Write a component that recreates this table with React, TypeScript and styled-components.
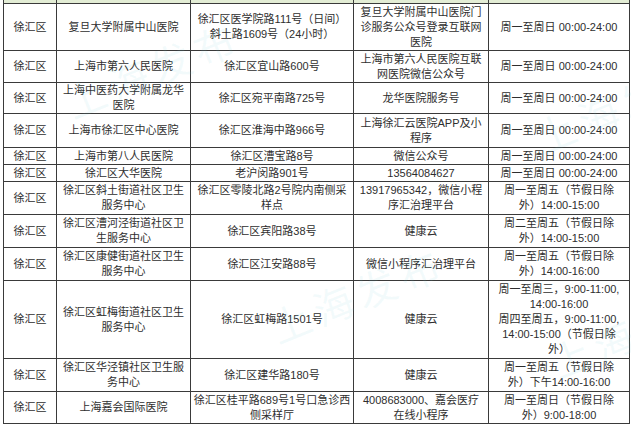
import React from 'react';
import styled, { createGlobalStyle } from 'styled-components';

const GlobalStyle = createGlobalStyle`
  html, body {
    margin: 0;
    padding: 0;
    background: #ffffff;
  }
  body {
    font-family: "Liberation Sans", "Noto Sans CJK SC", sans-serif;
    color: #2e2e2e;
  }
`;

const Page = styled.div`
  position: relative;
  width: 631px;
  height: 427px;
  overflow: hidden;
  background: #fff;
`;

const Table = styled.table`
  margin-left: 3px;
  width: 626px;
  border-collapse: collapse;
  table-layout: fixed;
  font-size: 11px;
  line-height: 15px;
`;

const Col = styled.col<{ $w: number }>`
  width: ${p => p.$w}px;
`;

const HeadCell = styled.th`
  height: 3px;
  padding: 0;
  background: #e3edd5;
  border-left: 1px solid #3a3a3a;
  border-right: 1px solid #3a3a3a;
  border-bottom: 1px solid #3a3a3a;
`;

const Row = styled.tr<{ $h: number }>`
  height: ${p => p.$h}px;
`;

const Cell = styled.td`
  border: 1px solid #3a3a3a;
  padding: 0 2px;
  text-align: center;
  vertical-align: middle;
  white-space: pre;
  overflow: hidden;
  font-weight: 400;
`;

const Watermark = styled.div<{ $x: number; $y: number }>`
  position: absolute;
  left: ${p => p.$x}px;
  top: ${p => p.$y}px;
  font-family: "Noto Sans CJK SC", sans-serif;
  font-size: 40px;
  font-weight: 400;
  letter-spacing: 6px;
  color: rgba(120, 205, 215, 0.09);
  transform: rotate(-22deg);
  pointer-events: none;
  white-space: nowrap;
`;

const cols = [53, 134, 163, 135, 141];

type Item = { h: number; cells: string[] };

const rows: Item[] = [
  { h: 47, cells: ['徐汇区', '复旦大学附属中山医院', '徐汇区医学院路111号（日间）\n斜土路1609号（24小时）', '复旦大学附属中山医院门\n诊服务公众号登录互联网\n医院', '周一至周日 00:00-24:00'] },
  { h: 32, cells: ['徐汇区', '上海市第六人民医院', '徐汇区宜山路600号', '上海市第六人民医院互联\n网医院微信公众号', '周一至周日 00:00-24:00'] },
  { h: 31, cells: ['徐汇区', '上海中医药大学附属龙华\n医院', '徐汇区宛平南路725号', '龙华医院服务号', '周一至周日 00:00-24:00'] },
  { h: 34, cells: ['徐汇区', '上海市徐汇区中心医院', '徐汇区淮海中路966号', '上海徐汇云医院APP及小\n程序', '周一至周日 00:00-24:00'] },
  { h: 17, cells: ['徐汇区', '上海市第八人民医院', '徐汇区漕宝路8号', '微信公众号', '周一至周日 00:00-24:00'] },
  { h: 17, cells: ['徐汇区', '徐汇区大华医院', '老沪闵路901号', '13564084627', '周一至周日 00:00-24:00'] },
  { h: 33, cells: ['徐汇区', '徐汇区斜土街道社区卫生\n服务中心', '徐汇区零陵北路2号院内南侧采\n样点', '13917965342，微信小程\n序汇治理平台', '周一至周五（节假日除\n外）14:00-15:00'] },
  { h: 33, cells: ['徐汇区', '徐汇区漕河泾街道社区卫\n生服务中心', '徐汇区宾阳路38号', '健康云', '周二至周五（节假日除\n外）14:00-15:00'] },
  { h: 33, cells: ['徐汇区', '徐汇区康健街道社区卫生\n服务中心', '徐汇区江安路88号', '微信小程序汇治理平台', '周一至周五（节假日除\n外）14:00-16:00'] },
  { h: 78, cells: ['徐汇区', '徐汇区虹梅街道社区卫生\n服务中心', '徐汇区虹梅路1501号', '健康云', '周一至周三，9:00-11:00,\n14:00-16:00\n周四至周五，9:00-11:00,\n14:00-15:00（节假日除\n外）'] },
  { h: 33, cells: ['徐汇区', '徐汇区华泾镇社区卫生服\n务中心', '徐汇区建华路180号', '健康云', '周一至周五（节假日除\n外）下午14:00-16:00'] },
  { h: 32, cells: ['徐汇区', '上海嘉会国际医院', '徐汇区桂平路689号1号口急诊西\n侧采样厅', '4008683000、嘉会医疗\n在线小程序', '周一至周日（节假日除\n外）9:00-18:00'] },
];

const marks = [
  { x: 60, y: 40 },
  { x: 265, y: 265 },
  { x: 530, y: 75 },
  { x: 545, y: 300 },
];

export default function App() {
  return (
    <Page>
      <GlobalStyle />
      <Table>
        <colgroup>
          {cols.map((w, i) => <Col key={i} $w={w} />)}
        </colgroup>
        <thead>
          <tr>
            {cols.map((_, i) => <HeadCell key={i} />)}
          </tr>
        </thead>
        <tbody>
          {rows.map((r, i) => (
            <Row key={i} $h={r.h}>
              {r.cells.map((c, j) => <Cell key={j}>{c}</Cell>)}
            </Row>
          ))}
        </tbody>
      </Table>
      {marks.map((m, i) => (
        <Watermark key={i} $x={m.x} $y={m.y}>上海发布</Watermark>
      ))}
    </Page>
  );
}
